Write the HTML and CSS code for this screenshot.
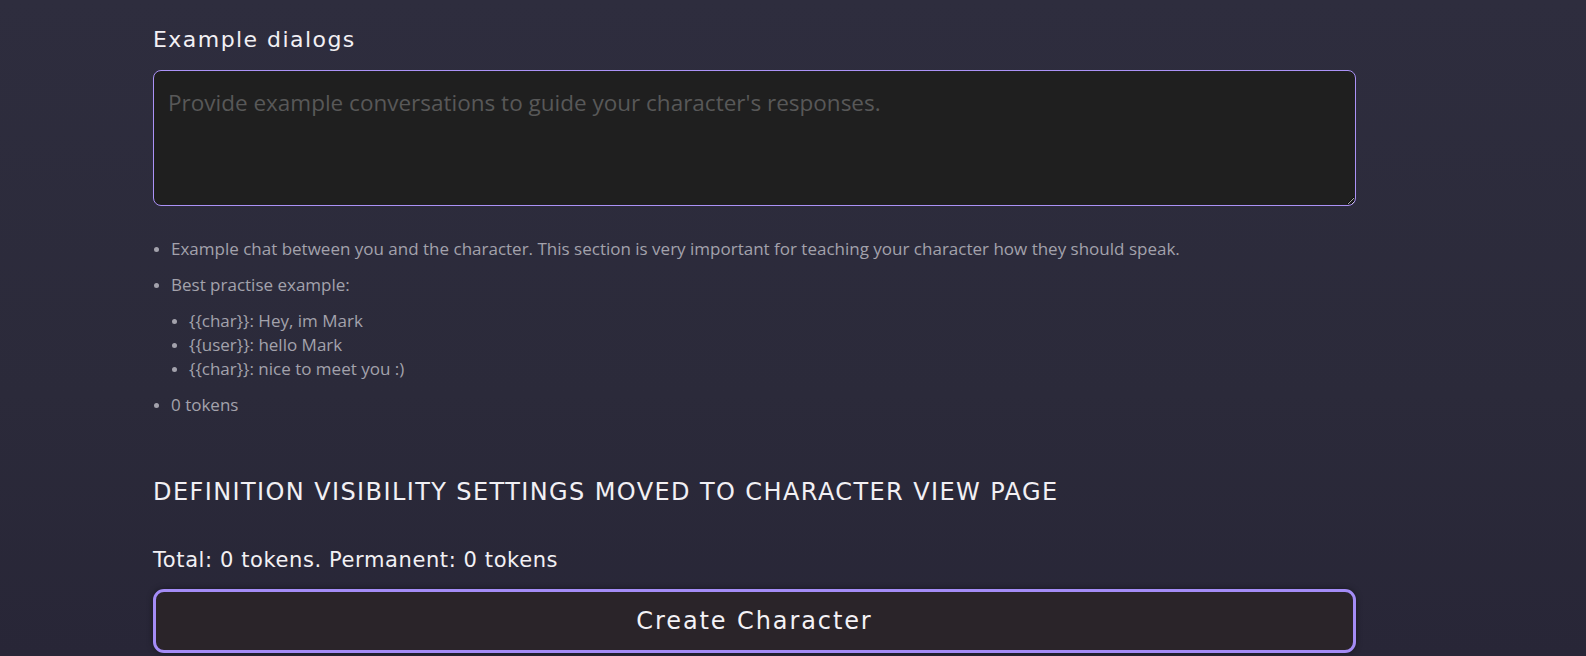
FILE: index.html
```html
<!DOCTYPE html>
<html>
<head>
<meta charset="utf-8">
<link rel="stylesheet" href="styles.css">
</head>
<body>
<main class="page">
  <section class="field">
    <label class="field-label" for="dialogs">Example dialogs</label>
    <textarea id="dialogs" class="textarea" placeholder="Provide example conversations to guide your character's responses."></textarea>
    <ul class="hints">
      <li>Example chat between you and the character. This section is very important for teaching your character how they should speak.</li>
      <li>Best practise example:
        <ul class="sub">
          <li>{{char}}: Hey, im Mark</li>
          <li>{{user}}: hello Mark</li>
          <li>{{char}}: nice to meet you :)</li>
        </ul>
      </li>
      <li>0 tokens</li>
    </ul>
  </section>
  <h2 class="notice">DEFINITION VISIBILITY SETTINGS MOVED TO CHARACTER VIEW PAGE</h2>
  <p class="total">Total: 0 tokens. Permanent: 0 tokens</p>
  <button class="create">Create Character</button>
</main>
</body>
</html>
```

FILE: styles.css
```css
html, body {
  margin: 0;
  padding: 0;
}
body {
  background: linear-gradient(180deg, #2e2d3e 0%, #2b2a3a 60%, #282637 100%);
  height: 656px;
  overflow: hidden;
  color: #f0eef2;
  font-family: "DejaVu Sans", sans-serif;
}
.page {
  width: 1203px;
  padding-left: 153px;
  display: flex;
  flex-direction: column;
}
.field {
  display: flex;
  flex-direction: column;
}
.field-label {
  display: block;
  font-size: 22px;
  line-height: 28px;
  margin-top: 26px;
  letter-spacing: 1.45px;
  color: #f2f0f4;
}
.textarea {
  box-sizing: border-box;
  margin-top: 16px;
  width: 1203px;
  height: 136px;
  background: #1f1f1f;
  border: 1px solid #ab92f7;
  border-radius: 8px;
  padding: 16px 14px;
  font-family: "Open Sans", "Noto Sans", sans-serif;
  font-size: 22.5px;
  line-height: 32px;
  color: #ddd;
  resize: vertical;
  outline: none;
}
.textarea::placeholder {
  color: #585858;
}
.hints {
  margin: 31px 0 0 0;
  padding: 0 0 0 18px;
  font-family: "Open Sans", "Noto Sans", sans-serif;
  font-size: 17px;
  line-height: 24px;
  color: #a3a2ac;
  list-style: disc;
}
.hints > li {
  margin-bottom: 12px;
}
.hints li::marker {
  font-size: 14px;
}
.sub {
  margin: 12px 0 0 0;
  padding: 0 0 0 18px;
  list-style: disc;
}
.notice {
  margin: 47px 0 0 0;
  font-weight: normal;
  font-size: 24px;
  line-height: 32px;
  letter-spacing: 1.4px;
  color: #f2f0f4;
}
.total {
  margin: 38px 0 0 0;
  font-size: 21px;
  line-height: 28px;
  letter-spacing: 0.6px;
  color: #f2f0f4;
}
.create {
  box-sizing: border-box;
  margin-top: 15px;
  width: 1203px;
  height: 64px;
  background: #2a2429;
  border: 3px solid #a48cf6;
  border-radius: 11px;
  color: #f4f2f6;
  font-family: "DejaVu Sans", sans-serif;
  font-size: 24px;
  letter-spacing: 1.9px;
  box-shadow: 0 0 6px rgba(0,0,0,0.4);
}
```
